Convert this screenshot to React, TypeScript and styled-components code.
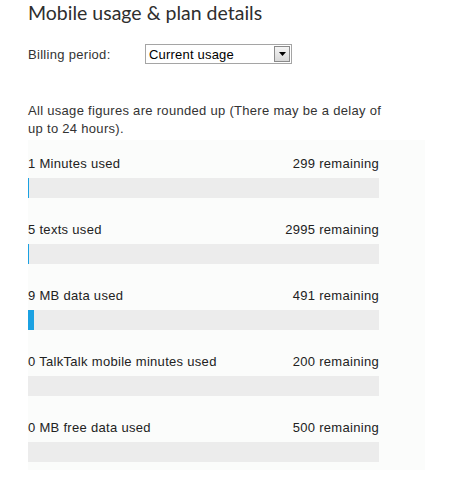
import styled, { createGlobalStyle } from "styled-components";

const GlobalStyle = createGlobalStyle`
  body {
    margin: 0;
    background: #ffffff;
    font-family: "Liberation Sans", Arial, sans-serif;
  }
`;

interface Usage {
  label: string;
  used: number;
  remaining: number;
}

const usages: Usage[] = [
  { label: "1 Minutes used", used: 1, remaining: 299 },
  { label: "5 texts used", used: 5, remaining: 2995 },
  { label: "9 MB data used", used: 9, remaining: 491 },
  { label: "0 TalkTalk mobile minutes used", used: 0, remaining: 200 },
  { label: "0 MB free data used", used: 0, remaining: 500 },
];

const App = () => {
  return (
    <Page>
      <GlobalStyle />
      <Title>Mobile usage &amp; plan details</Title>
      <BillingRow>
        <BillingLabel>Billing period:</BillingLabel>
        <Select>
          <SelectValue>Current usage</SelectValue>
          <ArrowButton>
            <svg width="7" height="4" viewBox="0 0 7 4">
              <path d="M0 0h7L3.5 4z" fill="#000" />
            </svg>
          </ArrowButton>
        </Select>
      </BillingRow>
      <Note>
        All usage figures are rounded up (There may be a delay of up to 24
        hours).
      </Note>
      <Panel>
        {usages.map((u) => {
          const pct = (u.used / (u.used + u.remaining)) * 100;
          return (
            <UsageRow key={u.label}>
              <UsageHeader>
                <span>{u.label}</span>
                <span>{u.remaining} remaining</span>
              </UsageHeader>
              <Track>
                {u.used > 0 && <Fill style={{ width: `${pct}%` }} />}
              </Track>
            </UsageRow>
          );
        })}
      </Panel>
    </Page>
  );
};

export default App;

const Page = styled.div`
  padding: 0 0 0 28px;
  color: #222;
`;

const Title = styled.h1`
  margin: 0;
  font-family: Lato, "Open Sans", sans-serif;
  font-weight: 400;
  font-size: 19.5px;
  line-height: 26px;
  color: #2e2e2e;
`;

const BillingRow = styled.div`
  display: flex;
  align-items: center;
  margin-top: 18px;
  height: 20px;
`;

const BillingLabel = styled.label`
  width: 117px;
  font-size: 13px;
  letter-spacing: 0.3px;
  color: #333;
`;

const Select = styled.div`
  display: flex;
  align-items: center;
  justify-content: space-between;
  box-sizing: border-box;
  width: 147px;
  height: 20px;
  border: 1px solid #a5a5a5;
  padding: 0 1px 0 3px;
  background: #fff;
`;

const SelectValue = styled.span`
  font-size: 13px;
  letter-spacing: 0.2px;
  color: #000;
`;

const ArrowButton = styled.span`
  display: flex;
  align-items: center;
  justify-content: center;
  box-sizing: border-box;
  width: 16px;
  height: 16px;
  border: 1px solid #8a8a8a;
  background: linear-gradient(#f4f4f4, #d8d8d8);
`;

const Note = styled.p`
  margin: 38px 0 2px;
  width: 372px;
  font-size: 13px;
  line-height: 18px;
  letter-spacing: 0.3px;
  color: #333;
`;

const Panel = styled.div`
  width: 397px;
  padding: 15px 0 8px;
  background: #fbfcfb;
`;

const UsageRow = styled.div`
  width: 351px;
  & + & {
    margin-top: 23px;
  }
`;

const UsageHeader = styled.div`
  display: flex;
  justify-content: space-between;
  font-size: 13px;
  line-height: 18px;
  letter-spacing: 0.3px;
  color: #222;
`;

const Track = styled.div`
  margin-top: 5px;
  height: 20px;
  background: #ececec;
`;

const Fill = styled.div`
  height: 100%;
  min-width: 1px;
  background: #1ba1e2;
`;
